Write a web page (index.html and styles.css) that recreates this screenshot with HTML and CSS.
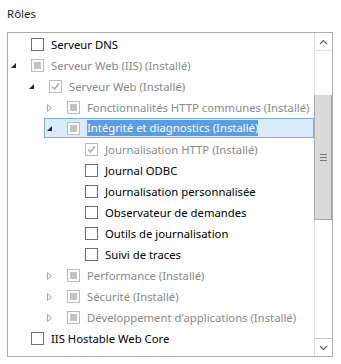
FILE: index.html
```html
<!DOCTYPE html>
<html lang="fr">
<head>
  <meta charset="UTF-8" />
  <title>Rôles</title>
  <link rel="stylesheet" href="styles.css">
</head>
<body>

  <div class="page">
    <h4 class="title">Rôles</h4>

    <div class="panel">
      <ul class="tree">
        <li class="node lvl-0">
          <span class="exp"></span>
          <span class="box"></span>
          <span class="label">Serveur DNS</span>
        </li>
        <li class="node lvl-0 installed">
          <span class="exp"><svg class="tri-open" viewBox="0 0 5 5" width="5" height="5"><path d="M5 0 L5 5 L0 5 Z"/></svg></span>
          <span class="box part"></span>
          <span class="label">Serveur Web (IIS) (Installé)</span>
        </li>
        <li class="node lvl-1 installed">
          <span class="exp"><svg class="tri-open" viewBox="0 0 5 5" width="5" height="5"><path d="M5 0 L5 5 L0 5 Z"/></svg></span>
          <span class="box"><svg viewBox="0 0 11 11" width="11" height="11"><path d="M2 5.5 L4.5 8 L9 2.5" fill="none" stroke="#a6a6a6" stroke-width="1.4"/></svg></span>
          <span class="label">Serveur Web (Installé)</span>
        </li>
        <li class="node lvl-2 installed">
          <span class="exp"><svg class="tri-closed" viewBox="0 0 5 8" width="5" height="8"><path d="M0.5 0.5 L4.5 4 L0.5 7.5 Z"/></svg></span>
          <span class="box part"></span>
          <span class="label">Fonctionnalités HTTP communes (Installé)</span>
        </li>
        <li class="node lvl-2 installed selected">
          <span class="exp"><svg class="tri-open" viewBox="0 0 5 5" width="5" height="5"><path d="M5 0 L5 5 L0 5 Z"/></svg></span>
          <span class="box part"></span>
          <span class="label">Intégrité et diagnostics (Installé)</span>
        </li>
        <li class="node lvl-3 installed">
          <span class="exp"></span>
          <span class="box"><svg viewBox="0 0 11 11" width="11" height="11"><path d="M2 5.5 L4.5 8 L9 2.5" fill="none" stroke="#a6a6a6" stroke-width="1.4"/></svg></span>
          <span class="label">Journalisation HTTP (Installé)</span>
        </li>
        <li class="node lvl-3">
          <span class="exp"></span>
          <span class="box"></span>
          <span class="label">Journal ODBC</span>
        </li>
        <li class="node lvl-3">
          <span class="exp"></span>
          <span class="box"></span>
          <span class="label">Journalisation personnalisée</span>
        </li>
        <li class="node lvl-3">
          <span class="exp"></span>
          <span class="box"></span>
          <span class="label">Observateur de demandes</span>
        </li>
        <li class="node lvl-3">
          <span class="exp"></span>
          <span class="box"></span>
          <span class="label">Outils de journalisation</span>
        </li>
        <li class="node lvl-3">
          <span class="exp"></span>
          <span class="box"></span>
          <span class="label">Suivi de traces</span>
        </li>
        <li class="node lvl-2 installed">
          <span class="exp"><svg class="tri-closed" viewBox="0 0 5 8" width="5" height="8"><path d="M0.5 0.5 L4.5 4 L0.5 7.5 Z"/></svg></span>
          <span class="box part"></span>
          <span class="label">Performance (Installé)</span>
        </li>
        <li class="node lvl-2 installed">
          <span class="exp"><svg class="tri-closed" viewBox="0 0 5 8" width="5" height="8"><path d="M0.5 0.5 L4.5 4 L0.5 7.5 Z"/></svg></span>
          <span class="box part"></span>
          <span class="label">Sécurité (Installé)</span>
        </li>
        <li class="node lvl-2 installed">
          <span class="exp"><svg class="tri-closed" viewBox="0 0 5 8" width="5" height="8"><path d="M0.5 0.5 L4.5 4 L0.5 7.5 Z"/></svg></span>
          <span class="box part"></span>
          <span class="label">Développement d'applications (Installé)</span>
        </li>
        <li class="node lvl-0">
          <span class="exp"></span>
          <span class="box"></span>
          <span class="label">IIS Hostable Web Core</span>
        </li>
      </ul>

      <div class="scrollbar">
        <div class="sb-btn up">
          <svg viewBox="0 0 9 6" width="9" height="6"><path d="M1 5 L4.5 1.5 L8 5" fill="none" stroke="#606060" stroke-width="1.2"/></svg>
        </div>
        <div class="sb-track top"></div>
        <div class="sb-thumb"><span class="grip"></span></div>
        <div class="sb-track bottom"></div>
        <div class="sb-btn down">
          <svg viewBox="0 0 9 6" width="9" height="6"><path d="M1 1 L4.5 4.5 L8 1" fill="none" stroke="#606060" stroke-width="1.2"/></svg>
        </div>
      </div>
    </div>
  </div>

</body>
</html>
```

FILE: styles.css
```css
:root {
  --border: #acacac;
  --muted: #8a8a8a;
  --text: #000;
  --select-bg: #dcebfc;
  --select-border: #84acdd;
  --hilite: #5a9de3;
}
body {
  margin: 0;
  padding: 0;
  background: #fff;
  font-family: 'Noto Sans', 'Segoe UI', sans-serif;
  font-size: 11.3px;
  color: var(--text);
}
.page {
  padding: 6px 8px 0 7px;
}
.title {
  margin: 0 0 10px;
  font-weight: 400;
  font-size: 11.5px;
  line-height: 16px;
  color: #1e1e1e;
}
.panel {
  display: flex;
  width: 324px;
  height: 323px;
  border: 1px solid var(--border);
  overflow: hidden;
}
.tree {
  flex: 1;
  min-width: 0;
  overflow: hidden;
  list-style: none;
  margin: 0;
  padding: 1px 0 0;
}
.node {
  display: flex;
  align-items: center;
  height: 21px;
  white-space: nowrap;
}
.lvl-0 { padding-left: 0; }
.lvl-1 { padding-left: 18px; }
.lvl-2 { padding-left: 36px; }
.lvl-3 { padding-left: 54px; }

.exp {
  display: flex;
  align-items: center;
  width: 20px;
  height: 21px;
  padding-left: 3px;
  flex: none;
}
.exp svg {
  display: block;
}
.tri-open path {
  fill: #262626;
}
.tri-closed path {
  fill: none;
  stroke: #a6a6a6;
  stroke-width: 1;
}
.box {
  position: relative;
  width: 11px;
  height: 11px;
  border: 1px solid #707070;
  background: #fff;
  flex: none;
  margin-right: 7px;
}
.installed .box {
  border-color: #bcbcbc;
}
.box.part::after {
  content: "";
  position: absolute;
  left: 2px;
  top: 2px;
  width: 7px;
  height: 7px;
  background: #c3c3c3;
}
.box svg {
  display: block;
}
.label {
  line-height: 16px;
}
.installed .label {
  color: var(--muted);
}

.selected {
  background: var(--select-bg);
  box-shadow: inset 0 0 0 1px var(--select-border);
  margin-left: 36px;
  padding-left: 0;
  height: 20px;
  margin-bottom: 1px;
}
.selected .label {
  background: var(--hilite);
  color: #fff;
}

.scrollbar {
  display: flex;
  flex-direction: column;
  width: 17px;
  flex: none;
  border-left: 1px solid #dcdcdc;
}
.sb-btn {
  height: 17px;
  display: flex;
  align-items: center;
  justify-content: center;
}
.sb-btn.up {
  border-bottom: 1px solid #e3e3e3;
}
.sb-btn.down {
  border-top: 1px solid #c6c6c6;
}
.sb-track.top {
  height: 44px;
}
.sb-track.bottom {
  flex: 1;
}
.sb-thumb {
  height: 124px;
  background: #dadada;
  border: 1px solid #a8a8a8;
  border-top: none;
  margin-left: -1px;
  display: flex;
  align-items: center;
  justify-content: center;
}
.grip {
  width: 7px;
  height: 5px;
  border-top: 1px solid #777;
  border-bottom: 1px solid #777;
  position: relative;
}
.grip::after {
  content: "";
  position: absolute;
  left: 0;
  right: 0;
  top: 2px;
  border-top: 1px solid #777;
}
```
